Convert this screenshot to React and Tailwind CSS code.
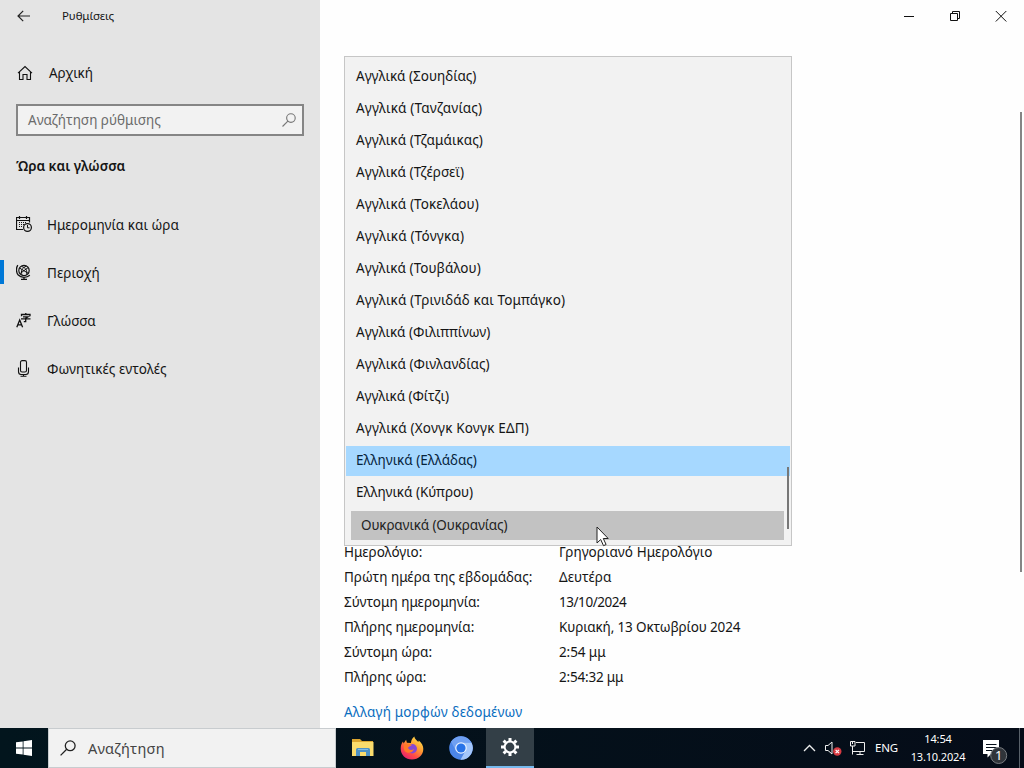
const languages = [
  ['Αγγλικά (Σουηδίας)', 'tracking-normal'],
  ['Αγγλικά (Τανζανίας)', 'tracking-[0.15px]'],
  ['Αγγλικά (Τζαμάικας)', 'tracking-[0.09px]'],
  ['Αγγλικά (Τζέρσεϊ)', 'tracking-[0.06px]'],
  ['Αγγλικά (Τοκελάου)', 'tracking-[0.11px]'],
  ['Αγγλικά (Τόνγκα)', 'tracking-[0.19px]'],
  ['Αγγλικά (Τουβάλου)', 'tracking-[0.06px]'],
  ['Αγγλικά (Τρινιδάδ και Τομπάγκο)', 'tracking-[0.13px]'],
  ['Αγγλικά (Φιλιππίνων)', 'tracking-normal'],
  ['Αγγλικά (Φινλανδίας)', 'tracking-[0.05px]'],
  ['Αγγλικά (Φίτζι)', 'tracking-[-0.06px]'],
  ['Αγγλικά (Χονγκ Κονγκ ΕΔΠ)', 'tracking-[0.18px]'],
];

const details = [
  ['Ημερολόγιο:', 'Γρηγοριανό Ημερολόγιο', 'tracking-[0.11px]'],
  ['Πρώτη ημέρα της εβδομάδας:', 'Δευτέρα', 'tracking-[0.05px]'],
  ['Σύντομη ημερομηνία:', '13/10/2024', 'tracking-[-0.45px]'],
  ['Πλήρης ημερομηνία:', 'Κυριακή, 13 Οκτωβρίου 2024', 'tracking-[-0.13px]'],
  ['Σύντομη ώρα:', '2:54 μμ', 'tracking-[-0.1px]'],
  ['Πλήρης ώρα:', '2:54:32 μμ', 'tracking-[-0.2px]'],
];

function BackIcon() {
  return (
    <svg width="14" height="12" viewBox="0 0 14 12" fill="none" stroke="#222" strokeWidth="1.2">
      <path d="M13 6H1M6.2 .8L1 6l5.200 5.200" />
    </svg>
  );
}

function HomeIcon() {
  return (
    <svg width="16" height="16" viewBox="0 0 16 16" fill="none" stroke="#111" strokeWidth="1.1">
      <path d="M1 8.200L8 1.500l7 6.700M2.500 7v7.500h3.500V9.500h4v5h3.500V7" />
    </svg>
  );
}

function SearchIcon({ size, color }) {
  return (
    <svg width={size} height={size} viewBox="0 0 16 16" fill="none" stroke={color} strokeWidth="1.300">
      <circle cx="10.200" cy="5.800" r="4.900" />
      <path d="M6.700 9.300L.6 15.400" />
    </svg>
  );
}

function CalendarClockIcon() {
  return (
    <svg className="-mt-0.5" width="16" height="16" viewBox="0 0 16 16" fill="none" stroke="#111">
      <path d="M7 13.500H.5v-12h13v5M.5 4.500h13M3.500 0v3M10.500 0v3" strokeWidth="1.200" />
      <path d="M3 6.500h8M3 8.500h5M3 10.500h4" strokeDasharray="1 1" />
      <circle cx="11.500" cy="11.500" r="3.900" fill="#e4e4e4" strokeWidth="1.200" />
      <path d="M11.500 9v2.800h2" />
    </svg>
  );
}

function GlobeStandIcon() {
  return (
    <svg className="-mt-0.5" width="16" height="16" viewBox="0 0 16 16" fill="none" stroke="#111">
      <circle cx="8" cy="6.500" r="5.200" strokeWidth="1.200" />
      <path d="M3.500 4l9 5.500M4.200 9.500l8-6M5.500 2.500c4.500 1 6 4.500 5 8M10.500 2.200C6 3.500 4.500 7 6 11" />
      <path d="M1.800 1.200C-.1 4 0 8.400 2.300 11c2.800 3 8.300 3 11.500.3M8 13v2.500M5 15.300h6" strokeWidth="1.300" />
    </svg>
  );
}

function LanguageIcon() {
  return (
    <svg width="16" height="16" viewBox="0 0 16 16" fill="none" stroke="#111">
      <path d="M.8 14.200L3.700 7l2.900 7.200M1.900 11.800h3.700" strokeWidth="1.300" />
      <path d="M5.500 3.200V1.500h8.500v1.700M9.800 0v1.500M7 3.800h5L9.700 5.300v3.300H7.800M5 5.800h9.500" strokeWidth="1.300" />
    </svg>
  );
}

function MicIcon() {
  return (
    <svg className="-mt-0.5" width="16" height="17" viewBox="0 0 16 17" fill="none" stroke="#111" strokeWidth="1.100">
      <rect x="4.500" y=".6" width="6" height="11.400" rx="1.600" />
      <path d="M2.500 7.500v4c0 2 1 3 2.500 3h5c1.500 0 2.500-1 2.500-3v-4M7.500 14.500v2M4.500 16.200h6" />
    </svg>
  );
}

const navItems = [
  ['Ημερομηνία και ώρα', CalendarClockIcon, false],
  ['Περιοχή', GlobeStandIcon, true],
  ['Γλώσσα', LanguageIcon, false],
  ['Φωνητικές εντολές', MicIcon, false],
];

function Sidebar() {
  return (
    <aside className="flex w-80 shrink-0 flex-col bg-[#e4e4e4]">
      <div className="flex h-8 items-center pl-[17px]">
        <BackIcon />
        <span className="ml-[31px] text-[11.500px] tracking-[-0.1px]">Ρυθμίσεις</span>
      </div>
      <div className="mt-[25px] flex h-8 items-center pl-[17px]">
        <HomeIcon />
        <span className="ml-4 tracking-[-0.1px]">Αρχική</span>
      </div>
      <div className="mx-4 mt-[15px] flex h-8 items-center justify-between border-2 border-[#858585] bg-[#f2f2f2] pr-[6px] pl-[10px] text-[#6b6b6b]">
        <span>Αναζήτηση ρύθμισης</span>
        <SearchIcon size={14} color="#777" />
      </div>
      <h2 className="mt-5 pl-4 text-[13.500px] leading-5 font-semibold">Ώρα και γλώσσα</h2>
      <nav className="mt-[25px] flex flex-col">
        {navItems.map(([label, Icon, active]) => (
          <div key={label} className="flex h-12 items-center">
            <span className={active ? 'h-6 w-1 -mt-0.5 bg-[#0078d7]' : 'h-6 w-1'} />
            <span className="ml-3 flex w-[31px]">
              <Icon />
            </span>
            <span className="tracking-[0.03px]">{label}</span>
          </div>
        ))}
      </nav>
    </aside>
  );
}

function WindowControls() {
  return (
    <div className="flex h-8 justify-end">
      <svg width="138" height="32" viewBox="0 0 138 32" fill="none" stroke="#111">
        <path d="M18 16.500h10" />
        <path d="M64.500 13.500h7v7h-7zM66.500 13.500v-2h7v7h-2" />
        <path d="M109.800 11l10.500 10.500M120.300 11L109.800 21.500" />
      </svg>
    </div>
  );
}

function LanguageList() {
  return (
    <div className="absolute top-14 left-6 h-[490px] w-[448px] border border-[#c6c6c6] bg-[#f2f2f2] pt-[3px]">
      {languages.map(([label, tracking]) => (
        <div key={label} className="flex h-8 items-center pl-[11px]">
          <span className={tracking}>{label}</span>
        </div>
      ))}
      <div className="flex h-8 items-center px-px">
        <div className="mt-0.5 flex h-[30px] w-full items-center bg-[#a6d8ff] pb-0.5 pl-[10px] text-[#06243c]">Ελληνικά (Ελλάδας)</div>
      </div>
      <div className="flex h-8 items-center pl-[11px] tracking-[-0.04px]">Ελληνικά (Κύπρου)</div>
      <div className="mt-[3px] mr-[7px] ml-[6px] flex h-[29px] items-center bg-[#c2c2c2] pl-[10px] tracking-[-0.14px] text-[#222]">Ουκρανικά (Ουκρανίας)</div>
      <span className="absolute top-[410px] right-[2px] h-[62px] w-[2px] bg-[#777]" />
      <svg className="absolute top-[469px] left-[251px]" width="14" height="21" viewBox="0 0 14 21">
        <path d="M1 1v16l3.700-3.500 2.800 6.200 2.600-1.200-2.800-6H12.200z" fill="#fff" stroke="#222" />
      </svg>
    </div>
  );
}

function RegionPage() {
  return (
    <main className="relative flex grow flex-col bg-[#fefefe]">
      <WindowControls />
      <div className="flex grow justify-between pr-[2px] pl-6">
        <section className="flex flex-col pt-[508px]">
          {details.map(([name, value, tracking]) => (
            <div key={name} className="flex h-[25px] items-center">
              <span className="w-[215px]">{name}</span>
              <span className={tracking}>{value}</span>
            </div>
          ))}
          <a className="mt-[10px] flex h-[25px] items-center tracking-[0.19px] text-[#0a6dbe]">Αλλαγή μορφών δεδομένων</a>
        </section>
        <div className="mt-20 h-[460px] w-[2px] bg-[#858585]" />
      </div>
      <LanguageList />
    </main>
  );
}

function FolderIcon() {
  return (
    <svg width="24" height="24" viewBox="0 0 24 24">
      <path d="M1 3h8l2 2h11v5H1z" fill="#dba52f" />
      <path d="M1 6h21.500v14H1z" fill="#fadb6c" />
      <path d="M5 20v-6.500q0-1.500 1.500-1.500h11q1.500 0 1.500 1.500V20h-4v-4H9v4z" fill="#4d91c5" />
      <path d="M7 13.500h10" stroke="#83bce4" />
    </svg>
  );
}

function FirefoxIcon() {
  return (
    <svg width="24" height="24" viewBox="0 0 24 24">
      <defs>
        <linearGradient id="flame" x1=".85" y1=".05" x2=".2" y2="1">
          <stop offset="0" stopColor="#ffe34d" />
          <stop offset=".4" stopColor="#ff9831" />
          <stop offset=".7" stopColor="#ff4848" />
          <stop offset="1" stopColor="#e21e73" />
        </linearGradient>
      </defs>
      <path d="M12 23.500C5.500 23.500.7 19 .7 12.800c0-3 1-5.800 2.300-7.300l.6 2 2.500-3.800.8 3 4 .2C11.300 4 12.500 1.800 14.300.5c.3 2.500 2.500 3.700 4 5.500l.5-1.500c3 2.500 4.500 5.400 4.500 8.500 0 6-5 10.500-11.300 10.500z" fill="url(#flame)" />
      <circle cx="12.300" cy="12.700" r="4.700" fill="#8748d5" />
      <path d="M4 9c3-2.500 5-.8 8-.5-1 2-3.500 1.800-4 3.300.5 2 3 3 6 1.200-1.500 4-6 5-8.800 2.500C3.800 14 3.500 11 4 9z" fill="#ff7a28" />
    </svg>
  );
}

function ChromiumIcon() {
  return (
    <svg width="24" height="24" viewBox="0 0 24 24">
      <circle cx="12" cy="12" r="11.800" fill="#4c86e8" />
      <path d="M12 6.500h10.400A11.800 11.800 0 0 1 11.500 23.800l5-9z" fill="#a4c7fb" />
      <path d="M2 5.800A11.800 11.800 0 0 1 22.300 6.300H12L7.200 15z" fill="#6fa0f2" />
      <circle cx="12" cy="12" r="5.800" fill="#e9f2ff" />
      <circle cx="12" cy="12" r="4.600" fill="#2873e8" />
    </svg>
  );
}

function GearIcon() {
  return (
    <svg width="20" height="20" viewBox="0 0 20 20" fill="none" stroke="#fff">
      <circle cx="10" cy="10" r="5.400" strokeWidth="2" />
      <path d="M10 1v3M10 16v3M1 10h3M16 10h3M3.600 3.600l2.200 2.200M14.200 14.200l2.200 2.200M3.600 16.400l2.200-2.200M14.200 5.800l2.200-2.200" strokeWidth="3" />
    </svg>
  );
}

function TrayIcons() {
  return (
    <svg width="64" height="20" viewBox="0 0 64 20" fill="none" stroke="#eee">
      <path d="M1 13l5.500-5.500L12 13" strokeWidth="1.300" />
      <path d="M22.500 7.500h2.500l4-3.500v12l-4-3.500h-2.500z" />
      <circle cx="34.300" cy="13.500" r="4.200" fill="#d83a42" stroke="none" />
      <path d="M32.600 11.800l3.400 3.400M36 11.800l-3.400 3.400" stroke="#fff" strokeWidth="1.200" />
      <path d="M53 4.500h8.500v9H50M53.500 16.500h7M57 13.500v3M49.500 8v8.500" />
      <path d="M47.500 3.500h4.500v4.500h-4.500zM49.500 3v3" />
    </svg>
  );
}

function ActionCenterIcon() {
  return (
    <svg width="26" height="26" viewBox="0 0 26 26">
      <path d="M0 0h16v14H8l-3.500 3.500V14H0z" fill="#fff" />
      <path d="M3 4.500h10.500M3 7.500h10.500M3 10.500h7" stroke="#06101a" />
      <circle cx="15.700" cy="15.500" r="8" fill="#30343a" stroke="#777b80" />
      <text x="15.700" y="20.200" textAnchor="middle" fontSize="13" fill="#fff">1</text>
    </svg>
  );
}

function Taskbar() {
  return (
    <footer className="flex h-10 shrink-0 bg-linear-to-r from-[#02151d] to-[#050c18] text-white">
      <div className="flex w-12 items-center justify-center">
        <svg width="16" height="16" viewBox="0 0 16 16" fill="#fff">
          <path d="M0 2.300L6.700 1.400v6.100H0zM7.500 1.300L16 0v7.500H7.500zM0 8.400h6.700v6.200L0 13.700zM7.500 8.400H16V16l-8.500-1.200z" />
        </svg>
      </div>
      <div className="flex w-72 items-center border border-[#c8cccf] bg-[#f2f2f2] pl-[11px] text-[14.500px] text-[#444]">
        <SearchIcon size={16} color="#222" />
        <span className="mt-px ml-3 tracking-[0.25px]">Αναζήτηση</span>
      </div>
      <div className="ml-[3px] flex">
        <div className="flex w-12 items-center justify-center"><FolderIcon /></div>
        <div className="ml-px flex w-12 items-center justify-center"><FirefoxIcon /></div>
        <div className="ml-px flex w-12 items-center justify-center"><ChromiumIcon /></div>
        <div className="ml-px flex w-12 items-center justify-center border-b-2 border-[#76b9ed] bg-[#333f47]"><GearIcon /></div>
      </div>
      <div className="ml-auto flex items-center">
        <TrayIcons />
        <span className="ml-2 w-[35px] text-[11.500px] tracking-[-0.15px]">ENG</span>
        <div className="flex w-[56px] flex-col items-center text-[11px] leading-[18px] tracking-[-0.15px]">
          <span>14:54</span>
          <span>13.10.2024</span>
        </div>
        <div className="mt-2.5 ml-[17px] flex w-9"><ActionCenterIcon /></div>
        <div className="mr-[4px] h-10 w-px bg-[#59616a]" />
      </div>
    </footer>
  );
}

export default function App() {
  return (
    <div className="flex h-[768px] w-[1024px] flex-col overflow-hidden font-['Noto_Sans','Open_Sans',sans-serif] text-[13.500px] whitespace-nowrap text-[#151515]">
      <div className="flex min-h-0 grow">
        <Sidebar />
        <RegionPage />
      </div>
      <Taskbar />
    </div>
  );
}
